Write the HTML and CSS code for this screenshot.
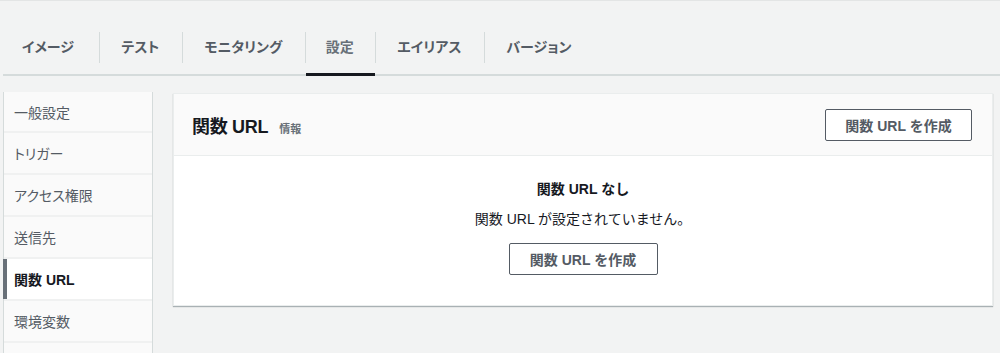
FILE: index.html
```html
<!DOCTYPE html>
<html lang="ja">
<head>
<meta charset="utf-8">
<title>関数 URL</title>
<link rel="stylesheet" href="styles.css">
</head>
<body>
<div class="page">
  <nav class="tabs">
    <div class="tab first"><span>イメージ</span></div>
    <div class="tab"><span>テスト</span></div>
    <div class="tab"><span>モニタリング</span></div>
    <div class="tab active"><span>設定</span></div>
    <div class="tab"><span>エイリアス</span></div>
    <div class="tab"><span>バージョン</span></div>
  </nav>
  <div class="layout">
    <aside class="sidenav">
      <div class="nav-item">一般設定</div>
      <div class="nav-item">トリガー</div>
      <div class="nav-item">アクセス権限</div>
      <div class="nav-item">送信先</div>
      <div class="nav-item active">関数 URL</div>
      <div class="nav-item">環境変数</div>
    </aside>
    <main class="content">
      <section class="panel">
        <header class="panel-header">
          <div class="title-group">
            <h2 class="title">関数 URL</h2>
            <span class="info">情報</span>
          </div>
          <button class="btn btn-header">関数 URL を作成</button>
        </header>
        <div class="panel-body">
          <div class="empty-title">関数 URL なし</div>
          <div class="empty-text">関数 URL が設定されていません。</div>
          <button class="btn btn-body">関数 URL を作成</button>
        </div>
      </section>
    </main>
  </div>
</div>
</body>
</html>
```

FILE: styles.css
```css
* { box-sizing: border-box; }

html, body {
  margin: 0;
  padding: 0;
  background: #f2f3f3;
  font-family: "Liberation Sans", "Noto Sans CJK JP", sans-serif;
  color: #16191f;
  overflow: hidden;
}

body {
  border-top: 1px solid #e3e5e5;
  height: 353px;
}

.page {
  padding-left: 3px;
}

.tabs {
  display: flex;
  align-items: flex-end;
  height: 75px;
  padding-top: 29px;
  border-bottom: 2px solid #d5dbdb;
}

.tab {
  position: relative;
  height: 44px;
  display: flex;
  align-items: center;
  padding: 0 22.5px 12px 22.5px;
  font-size: 14px;
  font-weight: bold;
  color: #545b64;
  font-feature-settings: "palt";
  white-space: nowrap;
}

.tab + .tab::before {
  content: "";
  position: absolute;
  left: 0;
  top: 2px;
  height: 31px;
  border-left: 1px solid #d5dbdb;
}

.tab.first {
  padding-left: 19px;
  padding-right: 25px;
}

.tab.active {
  color: #687078;
  padding-left: 21px;
  padding-right: 21px;
}

.tab.active::after {
  content: "";
  position: absolute;
  left: 1px;
  right: 0;
  bottom: -2px;
  height: 3px;
  background: #16191f;
}

.layout {
  display: flex;
  gap: 20px;
  padding-top: 16px;
}

.sidenav {
  width: 150px;
  flex: none;
  height: 261px;
  background: #fafafa;
  border-left: 1px solid #d5dbdb;
  border-right: 1px solid #d5dbdb;
}

.nav-item {
  position: relative;
  height: 42px;
  padding-left: 10px;
  display: flex;
  align-items: center;
  font-size: 14px;
  color: #545b64;
  border-bottom: 2px solid #f0f1f1;
  font-feature-settings: "palt";
}

.nav-item:first-child {
  height: 41px;
}

.nav-item.active {
  background: #ffffff;
  font-weight: bold;
  color: #16191f;
}

.nav-item.active::before {
  content: "";
  position: absolute;
  left: -1px;
  top: 0;
  bottom: 0;
  width: 4px;
  background: #687078;
}

.content {
  flex: 1;
  padding-right: 7px;
}

.panel {
  margin-top: 1px;
  background: #ffffff;
  border: 1px solid #eaeded;
  box-shadow: 0 1px 1px 0 rgba(0, 28, 36, 0.3);
}

.panel-header {
  display: flex;
  align-items: center;
  justify-content: space-between;
  height: 62px;
  padding: 0 20px 0 18px;
  background: #fafafa;
  border-bottom: 1px solid #eaeded;
}

.title-group {
  display: flex;
  align-items: baseline;
  gap: 11px;
}

.title {
  margin: 0;
  font-size: 18px;
  font-weight: bold;
  color: #16191f;
  letter-spacing: -0.3px;
}

.info {
  font-size: 11px;
  font-weight: bold;
  color: #687078;
}

.btn {
  height: 32px;
  padding: 0;
  background: #ffffff;
  border: 1px solid #545b64;
  border-radius: 2px;
  font-family: "Liberation Sans", "Noto Sans CJK JP", sans-serif;
  font-size: 14px;
  font-weight: bold;
  color: #545b64;
  white-space: nowrap;
  text-align: center;
}

.btn-header {
  width: 147px;
}

.panel-body {
  display: flex;
  flex-direction: column;
  align-items: center;
  padding: 23px 0 30px;
}

.empty-title {
  font-size: 14px;
  font-weight: bold;
  line-height: 20px;
  color: #16191f;
}

.empty-text {
  margin-top: 10px;
  font-size: 14px;
  line-height: 20px;
  color: #16191f;
}

.btn-body {
  margin-top: 14px;
  width: 149px;
}
```
